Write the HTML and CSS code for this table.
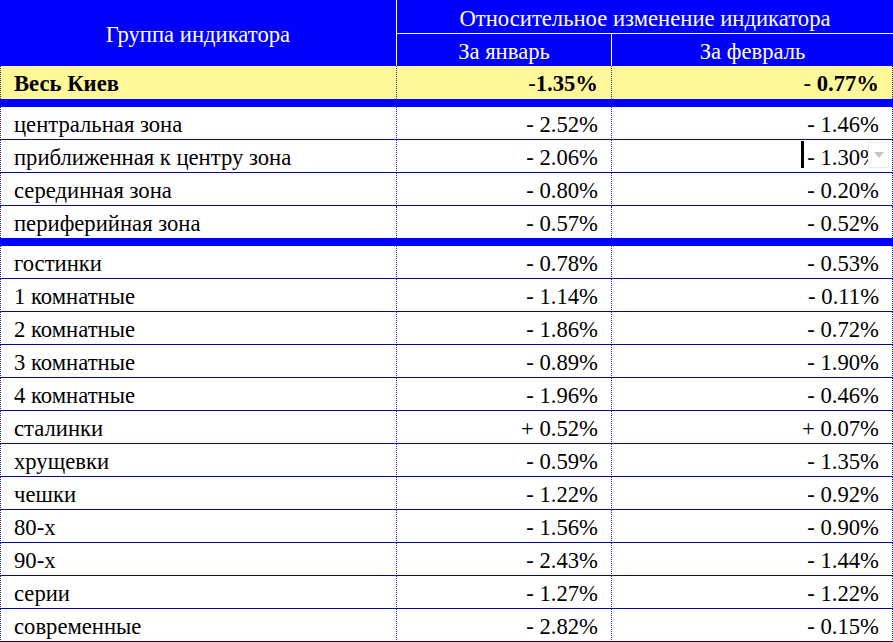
FILE: index.html
```html
<!DOCTYPE html>
<html>
<head>
<meta charset="utf-8">
<title>Indicator table</title>
<link rel="stylesheet" href="styles.css">
</head>
<body>
<table class="sheet">
  <colgroup>
    <col class="c1">
    <col class="c2">
    <col class="c3">
  </colgroup>
  <tr class="h1">
    <th class="hgroup" rowspan="2">Группа индикатора</th>
    <th class="htop" colspan="2">Относительное изменение индикатора</th>
  </tr>
  <tr class="h2">
    <th class="hjan">За январь</th>
    <th class="hfeb">За февраль</th>
  </tr>
  <tr class="row total">
    <td class="name">Весь Киев</td>
    <td class="val"><span class="thin">-</span>1.35%</td>
    <td class="val"><span class="thin">- </span>0.77%</td>
  </tr>
  <tr class="barrow"><td class="bar" colspan="3"></td></tr>
  <tr class="row"><td class="name">центральная зона</td><td class="val">- 2.52%</td><td class="val">- 1.46%</td></tr>
  <tr class="row"><td class="name">приближенная к центру зона</td><td class="val">- 2.06%</td><td class="val active">- 1.30%<span class="cursor"></span><span class="dropdown"><span class="tri"></span></span></td></tr>
  <tr class="row"><td class="name">серединная зона</td><td class="val">- 0.80%</td><td class="val">- 0.20%</td></tr>
  <tr class="row last"><td class="name">периферийная зона</td><td class="val">- 0.57%</td><td class="val">- 0.52%</td></tr>
  <tr class="barrow"><td class="bar" colspan="3"></td></tr>
  <tr class="row"><td class="name">гостинки</td><td class="val">- 0.78%</td><td class="val">- 0.53%</td></tr>
  <tr class="row"><td class="name">1 комнатные</td><td class="val">- 1.14%</td><td class="val">- 0.11%</td></tr>
  <tr class="row"><td class="name">2 комнатные</td><td class="val">- 1.86%</td><td class="val">- 0.72%</td></tr>
  <tr class="row"><td class="name">3 комнатные</td><td class="val">- 0.89%</td><td class="val">- 1.90%</td></tr>
  <tr class="row"><td class="name">4 комнатные</td><td class="val">- 1.96%</td><td class="val">- 0.46%</td></tr>
  <tr class="row"><td class="name">сталинки</td><td class="val">+ 0.52%</td><td class="val">+ 0.07%</td></tr>
  <tr class="row"><td class="name">хрущевки</td><td class="val">- 0.59%</td><td class="val">- 1.35%</td></tr>
  <tr class="row"><td class="name">чешки</td><td class="val">- 1.22%</td><td class="val">- 0.92%</td></tr>
  <tr class="row"><td class="name">80-х</td><td class="val">- 1.56%</td><td class="val">- 0.90%</td></tr>
  <tr class="row"><td class="name">90-х</td><td class="val">- 2.43%</td><td class="val">- 1.44%</td></tr>
  <tr class="row"><td class="name">серии</td><td class="val">- 1.27%</td><td class="val">- 1.22%</td></tr>
  <tr class="row"><td class="name">современные</td><td class="val">- 2.82%</td><td class="val">- 0.15%</td></tr>
</table>
</body>
</html>
```
FILE: styles.css
```css
body {
  margin: 0;
  background: #ffffff;
  font-family: "Liberation Serif", serif;
  font-size: 22.67px;
  color: #000000;
}

.sheet {
  width: 893px;
  table-layout: fixed;
  border-collapse: separate;
  border-spacing: 0;
  font-family: "Liberation Serif", serif;
  font-size: 22.67px;
}

.c1 { width: 397px; }
.c2 { width: 215px; }
.c3 { width: 281px; }

th, td {
  padding: 0;
  line-height: 26px;
  white-space: nowrap;
  overflow: visible;
}

th {
  background: #0000ff;
  color: #ffffff;
  font-weight: normal;
  text-align: center;
  vertical-align: bottom;
  padding-bottom: 1px;
}

.h1 { height: 34px; }
.h2 { height: 32px; }

.hgroup {
  vertical-align: middle;
  padding: 3px 0 0 0;
  border-right: 1px solid #ffffff;
}

.htop {
  border-bottom: 1px solid #ffffff;
}

.hjan {
  border-right: 1px solid #ffffff;
}

.row {
  height: 33px;
}

.row td {
  vertical-align: bottom;
  padding-bottom: 1px;
  border-right: 1px dotted #1a1a9c;
  border-bottom: 1px solid #0a0a8a;
}

.row td.name {
  padding-left: 13px;
  border-left: 1px dotted #1a1a9c;
  text-align: left;
}

.row td.val {
  padding-right: 13px;
  text-align: right;
}

.total td {
  background: #fff799;
  font-weight: bold;
  border-bottom: none;
  padding-bottom: 2px;
  border-right-color: #333355;
}

.total td.name {
  border-left-color: #333355;
}

.thin {
  font-weight: normal;
  white-space: pre;
}

.row.last {
  height: 32px;
}

.row.last td {
  border-bottom: none;
}

.barrow {
  height: 8px;
}

.bar {
  height: 8px;
  padding: 0;
  background: #0000ff;
  line-height: 0;
  font-size: 0;
}

.active {
  position: relative;
}

.cursor {
  position: absolute;
  left: 189px;
  top: 1px;
  width: 3px;
  height: 27px;
  background: #000000;
}

.dropdown {
  position: absolute;
  left: 256px;
  top: 2px;
  width: 21px;
  height: 26px;
  box-sizing: border-box;
  background: #ffffff;
  border: 1px solid #ececec;
  display: flex;
  align-items: center;
  justify-content: center;
}

.tri {
  width: 0;
  height: 0;
  border-left: 5px solid transparent;
  border-right: 5px solid transparent;
  border-top: 6px solid #c4c4c4;
}
```
